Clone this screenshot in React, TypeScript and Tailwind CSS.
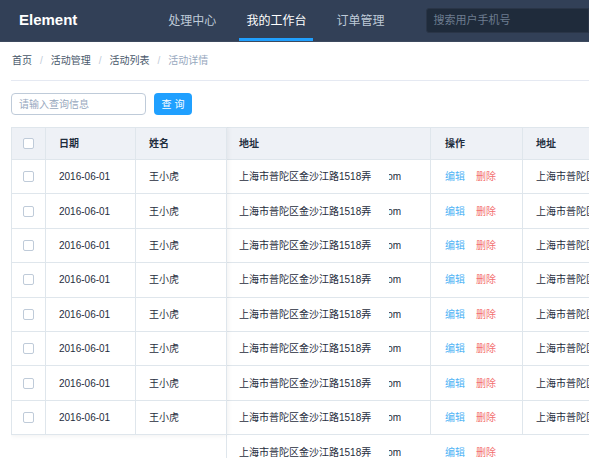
import React from "react";

const FONT = { fontFamily: '"Liberation Sans", "Noto Sans CJK SC", sans-serif' };

const ROWS = Array.from({ length: 8 }, () => ({
  date: "2016-06-01",
  name: "王小虎",
  address: "上海市普陀区金沙江路1518弄",
}));

const COLS = { check: 34, date: 90, name: 91, address: 204, ops: 92, address2: 200 };

function Checkbox() {
  return <span className="block h-[11px] w-[11px] rounded-[2px] border border-[#bfcbd9] bg-white" />;
}

function HeadCell({ w, children, center }: { w: number; children?: React.ReactNode; center?: boolean }) {
  return (
    <div
      style={{ width: w }}
      className={`flex h-full shrink-0 items-center border-r border-[#dfe6ec] font-bold text-[#1f2d3d] ${
        center ? "justify-center" : "pl-[13px]"
      }`}
    >
      {children}
    </div>
  );
}

function Cell({
  w,
  children,
  center,
  hidden,
  noBorder,
  pad = "pl-[13px]",
}: {
  w: number;
  children?: React.ReactNode;
  center?: boolean;
  hidden?: boolean;
  noBorder?: boolean;
  pad?: string;
}) {
  return (
    <div
      style={{ width: w }}
      className={`flex h-full shrink-0 items-center overflow-hidden whitespace-nowrap ${
        noBorder ? "" : "border-r border-[#dfe6ec]"
      } ${center ? "justify-center" : pad} ${hidden ? "invisible" : ""}`}
    >
      {children}
    </div>
  );
}

function AddressCell() {
  return (
    <>
      <span>上海市普陀区金沙江路1518弄</span>
      <span className="ml-[18px] inline-block w-[12px] overflow-hidden">
        <span className="ml-[-2px]">om</span>
      </span>
    </>
  );
}

function Ops() {
  return (
    <span className="flex gap-[11px] pl-[1px]">
      <span className="text-[#4db3f5]">编辑</span>
      <span className="text-[#f36f6f]">删除</span>
    </span>
  );
}

export default function App() {
  return (
    <div style={FONT} className="h-[458px] w-[589px] overflow-hidden bg-white text-[10px] text-[#1f2d3d]">
      {/* top nav */}
      <div className="flex h-[42px] items-center border-b border-[#3d4a5f] bg-[#324057]">
        <span className="ml-[19px] text-[15px] font-bold text-white">Element</span>
        <div className="ml-[84px] flex h-full gap-[16px] text-[12px]">
          <div className="flex h-full items-center px-[7px] text-[#bfcbd9]">处理中心</div>
          <div className="flex h-full items-center border-b-[3px] border-[#20a0ff] px-[7px] pt-[3px] text-white">
            我的工作台
          </div>
          <div className="flex h-full items-center px-[7px] text-[#bfcbd9]">订单管理</div>
        </div>
        <div className="ml-[35px] flex h-[25px] flex-1 items-center rounded-l-[3px] border border-[#2a3547] bg-[#1f2b3b] pl-[6px] text-[11px] text-[#6d7d90]">
          搜索用户手机号
        </div>
      </div>

      {/* breadcrumb */}
      <div className="ml-[11px] flex border-b border-[#e5e9f2] py-[12px] pl-[1px] leading-[14px]">
        <span className="text-[#48576a]">首页</span>
        <span className="mx-[8px] text-[#bfcbd9]">/</span>
        <span className="text-[#48576a]">活动管理</span>
        <span className="mx-[8px] text-[#bfcbd9]">/</span>
        <span className="text-[#48576a]">活动列表</span>
        <span className="mx-[8px] text-[#bfcbd9]">/</span>
        <span className="text-[#97a8be]">活动详情</span>
      </div>

      {/* query bar */}
      <div className="ml-[11px] mt-[12px] flex gap-[8px]">
        <div className="flex h-[22px] w-[135px] items-center rounded-[4px] border border-[#bfcbd9] pl-[7px] text-[#97a8be]">
          请输入查询信息
        </div>
        <div className="flex h-[22px] w-[38px] items-center justify-center rounded-[4px] bg-[#20a0ff] text-white">
          查 询
        </div>
      </div>

      {/* table */}
      <div className="relative ml-[11px] mt-[12px] overflow-hidden">
        <div className="w-max">
          <div className="flex h-[33px] border-y border-l border-[#dfe6ec] bg-[#eef1f6]">
            <HeadCell w={COLS.check} center />
            <HeadCell w={COLS.date} />
            <HeadCell w={COLS.name} />
            <HeadCell w={COLS.address}>
              <span className="-ml-[1px]">地址</span>
            </HeadCell>
            <HeadCell w={COLS.ops}>
              <span className="pl-[1px]">操作</span>
            </HeadCell>
            <HeadCell w={COLS.address2}>地址</HeadCell>
          </div>
          {ROWS.map((r, i) => (
            <div key={i} className="flex h-[34.4px] border-b border-l border-[#dfe6ec]">
              <Cell w={COLS.check} hidden />
              <Cell w={COLS.date} hidden />
              <Cell w={COLS.name} hidden />
              <Cell w={COLS.address} pad="pl-[12px]">
                <AddressCell />
              </Cell>
              <Cell w={COLS.ops}>
                <Ops />
              </Cell>
              <Cell w={COLS.address2}>{r.address}</Cell>
            </div>
          ))}
          <div className="flex h-[34.4px] pl-[1px]">
            <Cell w={COLS.check} noBorder />
            <Cell w={COLS.date} noBorder />
            <Cell w={COLS.name} />
            <Cell w={COLS.address} noBorder pad="pl-[12px]">
              <AddressCell />
            </Cell>
            <Cell w={COLS.ops} noBorder>
              <Ops />
            </Cell>
          </div>
        </div>

        {/* fixed left columns */}
        <div className="absolute left-0 top-0 h-[308px] w-[216px] overflow-hidden border-l border-[#dfe6ec] bg-white shadow-[0_0_6px_rgba(0,0,0,0.08)]">
          <div className="flex h-[33px] border-y border-[#dfe6ec] bg-[#eef1f6]">
            <HeadCell w={COLS.check} center>
              <Checkbox />
            </HeadCell>
            <HeadCell w={COLS.date}>日期</HeadCell>
            <HeadCell w={COLS.name}>姓名</HeadCell>
          </div>
          {ROWS.map((r, i) => (
            <div key={i} className="flex h-[34.4px] border-b border-[#dfe6ec]">
              <Cell w={COLS.check} center>
                <Checkbox />
              </Cell>
              <Cell w={COLS.date}>{r.date}</Cell>
              <Cell w={COLS.name}>{r.name}</Cell>
            </div>
          ))}
        </div>
      </div>
    </div>
  );
}
